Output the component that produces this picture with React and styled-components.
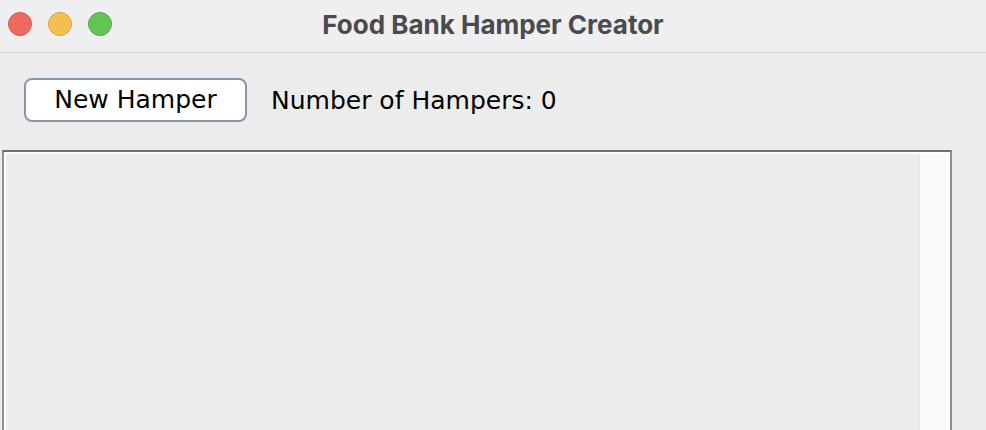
import React from 'react';
import styled, { createGlobalStyle } from 'styled-components';

const GlobalStyle = createGlobalStyle`
  html, body {
    margin: 0;
    padding: 0;
    background: #ececec;
    overflow: hidden;
  }
`;

const Window = styled.div`
  width: 986px;
  height: 430px;
  display: flex;
  flex-direction: column;
  background: #ececec;
  overflow: hidden;
`;

const TitleBar = styled.div`
  position: relative;
  height: 52px;
  flex-shrink: 0;
  background: #efeef0;
  border-bottom: 1px solid #d2d1d3;
  display: flex;
  align-items: center;
  justify-content: center;
`;

const Lights = styled.div`
  position: absolute;
  left: 8px;
  top: 12px;
  display: flex;
  gap: 16px;
`;

const Light = styled.span`
  width: 24px;
  height: 24px;
  border-radius: 50%;
  box-sizing: border-box;
  background: ${({ color }) => color};
  border: 1px solid ${({ edge }) => edge};
`;

const Title = styled.div`
  font-family: Inter, "Liberation Sans", sans-serif;
  font-weight: 700;
  font-size: 26px;
  color: #4b4a4c;
  margin-bottom: 3px;
`;

const Content = styled.div`
  flex: 1;
  display: flex;
  flex-direction: column;
  padding: 25px 34px 0 2px;
`;

const Toolbar = styled.div`
  display: flex;
  align-items: center;
  gap: 24px;
  padding-left: 22px;
  height: 44px;
`;

const Button = styled.button`
  width: 223px;
  height: 44px;
  box-sizing: border-box;
  background: #ffffff;
  border: 2px solid #8797ab;
  border-radius: 8px;
  font-family: "DejaVu Sans", "Liberation Sans", sans-serif;
  font-size: 25px;
  color: #000;
  padding: 0 0 2px;
  cursor: pointer;
`;

const Label = styled.span`
  font-family: "DejaVu Sans", "Liberation Sans", sans-serif;
  font-size: 25px;
  color: #000;
`;

const Panel = styled.div`
  margin-top: 28px;
  flex: 1;
  display: flex;
  border-top: 2px solid #6e6e6e;
  border-left: 2px solid #8f8f8f;
  border-right: 2px solid #8f8f8f;
  background: #ffffff;
  padding: 2px 4px 0 2px;
`;

const ListArea = styled.div`
  flex: 1;
  background: #ececec;
`;

const ScrollTrack = styled.div`
  width: 26px;
  background: #f9f9f9;
  border-left: 2px solid #e6e6e6;
`;

export default function App() {
  return (
    <>
      <GlobalStyle />
      <Window>
        <TitleBar>
          <Lights>
            <Light color="#ee6a5f" edge="#d4554b" />
            <Light color="#f5bf4f" edge="#d9a33a" />
            <Light color="#61c554" edge="#4da83f" />
          </Lights>
          <Title>Food Bank Hamper Creator</Title>
        </TitleBar>
        <Content>
          <Toolbar>
            <Button>New Hamper</Button>
            <Label>Number of Hampers: 0</Label>
          </Toolbar>
          <Panel>
            <ListArea />
            <ScrollTrack />
          </Panel>
        </Content>
      </Window>
    </>
  );
}
